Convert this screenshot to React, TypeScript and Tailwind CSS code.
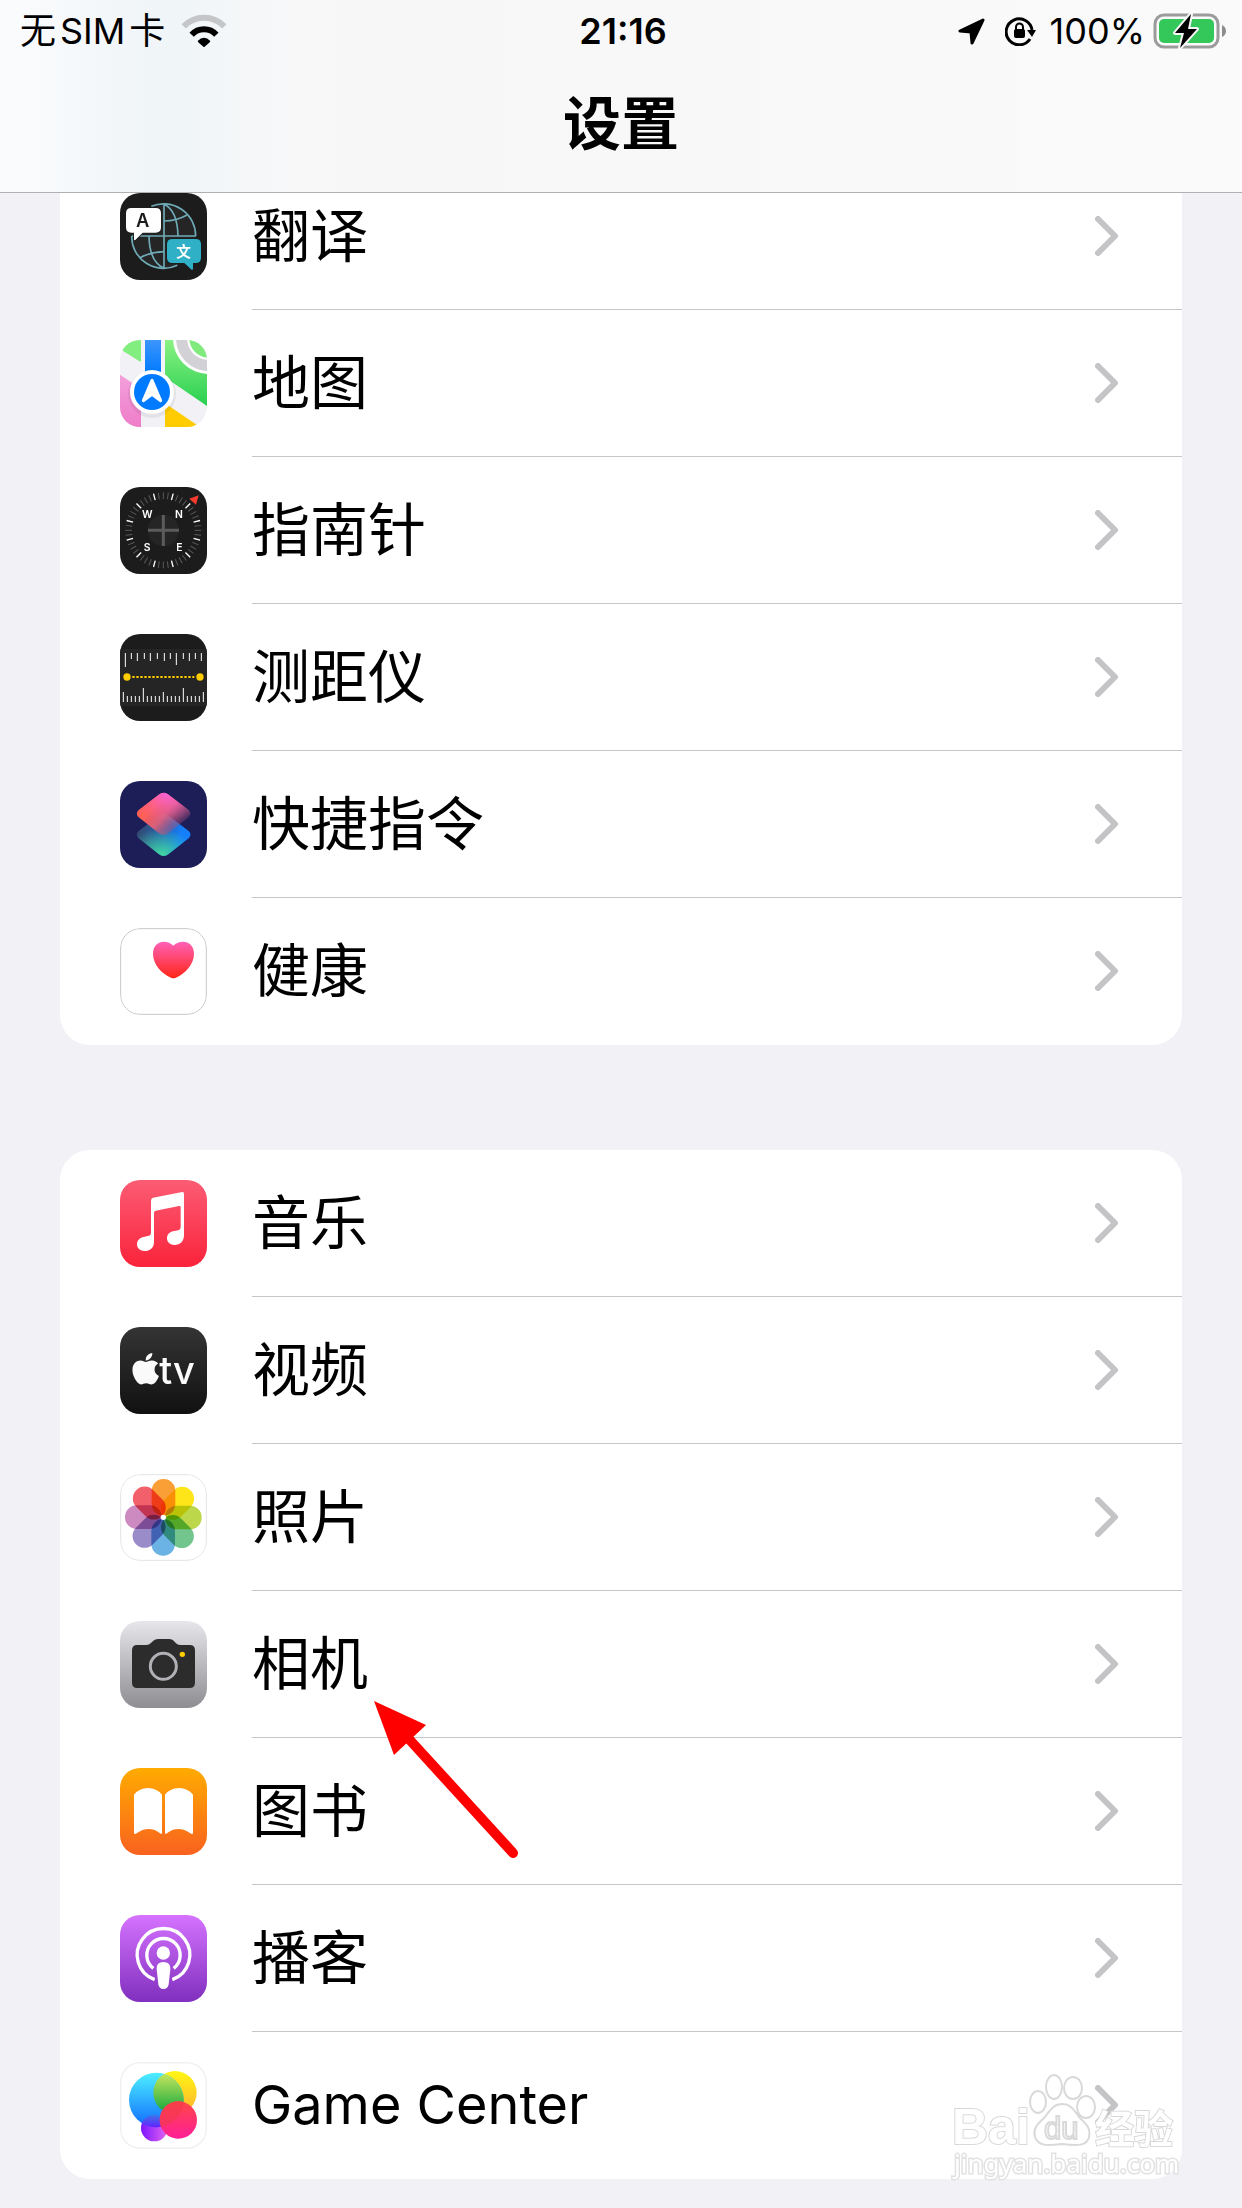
import type { ReactNode } from "react";
import { FaApple } from "react-icons/fa";

type Row = {
  name: string;
  icon: ReactNode;
  latin?: boolean;
  marked?: boolean;
};

/* Shared frame for the app icons */
function AppIcon({ children }: { children: ReactNode }) {
  return (
    <svg viewBox="0 0 261 261" className="size-[87px] shrink-0 rounded-[20px]" aria-hidden="true">
      {children}
    </svg>
  );
}

function Gradient({ id, from, to }: { id: string; from: string; to: string }) {
  return (
    <linearGradient id={id} x1="0" y1="0" x2="0" y2="1">
      <stop offset="0" stopColor={from} />
      <stop offset="1" stopColor={to} />
    </linearGradient>
  );
}

function TranslateIcon() {
  return (
    <AppIcon>
      <rect width="261" height="261" fill="#1c1c1c" />
      <circle cx="131" cy="130" r="96" fill="#252525" />
      <g fill="none" stroke="#6fabb7" strokeWidth="5">
        <path d="M94 40A96 96 0 0 1 227 129" />
        <path d="M35 129A96 96 0 0 0 172 217" />
        <path d="M132 34V227M35 129H228" />
        <path d="M132 34Q172 52 174 129M132 84Q170 84 201 66" />
        <path d="M87 129Q88 206 132 226M60 194Q90 178 132 176" />
      </g>
      <path d="M34 45H107Q123 45 123 61V103Q123 119 107 119H68L46 141Q42 143 42 138V119H34Q18 119 18 103V61Q18 45 34 45Z" fill="#fff" stroke="#1c1c1c" strokeWidth="5" paintOrder="stroke" />
      <text x="68" y="103" textAnchor="middle" fontFamily="Inter" fontSize="55" fontWeight="600" fill="#1c1c1c">A</text>
      <path d="M157 138H227Q243 138 243 154V194Q243 210 227 210H219V226Q219 234 213 229L193 210H157Q141 210 141 194V154Q141 138 157 138Z" fill="#30b0c7" stroke="#1c1c1c" strokeWidth="5" paintOrder="stroke" />
      <text x="191" y="191" textAnchor="middle" fontFamily="Noto Sans CJK SC" fontSize="44" fontWeight="700" fill="#fff">文</text>
    </AppIcon>
  );
}

function MapsIcon() {
  return (
    <AppIcon>
      <defs>
        <Gradient id="map-green" from="#8af283" to="#28cf50" />
        <Gradient id="map-pink" from="#f2a0dc" to="#ef7dc8" />
        <Gradient id="map-blue" from="#3d95fb" to="#007aff" />
      </defs>
      <rect width="261" height="261" fill="#f2f1f6" />
      <path d="M0 0H63V62Q62 67 57 63L0 27Z" fill="#82ee7f" />
      <path d="M135 0H261V198L135 112Z" fill="url(#map-green)" />
      <g>
        <circle cx="266" cy="-5" r="107" fill="#fff" />
        <circle cx="266" cy="-5" r="98" fill="#d1d1d6" />
        <circle cx="266" cy="-5" r="65" fill="#fff" />
        <circle cx="266" cy="-5" r="58" fill="#80eb7c" />
      </g>
      <path d="M63 0H75V100H63ZM123 0H135V100H123Z" fill="#f4f4f8" />
      <rect x="75" width="48" height="100" fill="url(#map-blue)" />
      <path d="M0 104L63 146V261H0Z" fill="url(#map-pink)" />
      <path d="M135 190L230 254L220 261H135Z" fill="#ffcc02" />
      <circle cx="96" cy="162" r="72" fill="#000" opacity="0.06" />
      <circle cx="96" cy="156" r="66" fill="#fff" />
      <circle cx="96" cy="156" r="54" fill="#007aff" />
      <path d="M96 121L70 182L96 163L122 182Z" fill="#fff" stroke="#fff" strokeWidth="9" strokeLinejoin="round" />
    </AppIcon>
  );
}

function CompassIcon() {
  return (
    <AppIcon>
      <rect width="261" height="261" fill="#1c1c1c" />
      {Array.from({ length: 48 }, (_, i) => (
        <path
          key={i}
          d="M130 16V36"
          stroke={i % 4 === 2 ? "#fff" : "#5a5a5a"}
          strokeWidth={i % 4 === 2 ? 4 : 3}
          transform={`rotate(${i * 7.5} 130 130)`}
        />
      ))}
      <circle cx="130" cy="130" r="47" fill="#252525" />
      <path d="M130 84V177M84 130H177" stroke="#5c5c5c" strokeWidth="9" />
      <path d="M236 25L228 53L208 35Z" fill="#ff3b30" />
      <g fontFamily="Inter" fontSize="31" fontWeight="600" fill="#fff" textAnchor="middle">
        <text x="82" y="93">W</text>
        <text x="177" y="93">N</text>
        <text x="81" y="192">S</text>
        <text x="178" y="192">E</text>
      </g>
    </AppIcon>
  );
}

function MeasureIcon() {
  return (
    <AppIcon>
      <rect width="261" height="261" fill="#1c1c1c" />
      <rect y="45" width="261" height="171" fill="#252525" />
      <path
        d="M16 57V99M34 57V75M52 57V81M73 57V75M91 57V81M112 57V75M133 57V81M151 57V75M169 57V93M190 57V75M208 57V81M226 57V75M244 57V81"
        stroke="#fff"
        strokeWidth="3"
      />
      {Array.from({ length: 21 }, (_, i) => (
        <path
          key={i}
          d={`M${10 + i * 12} 204V${i % 10 === 5 ? 162 : i % 5 === 0 ? 174 : 186}`}
          stroke="#fff"
          strokeWidth="3"
        />
      ))}
      <path d="M37 129H223" stroke="#ffcc00" strokeWidth="6" strokeDasharray="7 5" />
      <circle cx="21" cy="129" r="11" fill="#ffcc00" />
      <circle cx="240" cy="129" r="11" fill="#ffcc00" />
    </AppIcon>
  );
}

function ShortcutsIcon() {
  const diamond =
    "M116 41Q131 29 146 41L206 87Q217 98 206 109L146 156Q131 168 116 156L56 109Q45 98 56 87Z";
  return (
    <AppIcon>
      <defs>
        <linearGradient id="sc-blue" x1="0" y1="0.4" x2="0.8" y2="0.6">
          <stop offset="0" stopColor="#3c5a78" stopOpacity="0.7" />
          <stop offset="1" stopColor="#147efb" />
        </linearGradient>
        <radialGradient id="sc-green" cx="0.45" cy="1" r="0.65">
          <stop offset="0" stopColor="#43dd9c" />
          <stop offset="1" stopColor="#43dd9c" stopOpacity="0" />
        </radialGradient>
        <linearGradient id="sc-red" x1="0.3" y1="0.3" x2="0.95" y2="0.75">
          <stop offset="0" stopColor="#ff5f55" />
          <stop offset="0.4" stopColor="#e8607a" stopOpacity="0.9" />
          <stop offset="1" stopColor="#8a4a80" stopOpacity="0.2" />
        </linearGradient>
        <radialGradient id="sc-pink" cx="0.55" cy="0" r="0.7">
          <stop offset="0" stopColor="#fb62e0" />
          <stop offset="1" stopColor="#fb62a0" stopOpacity="0" />
        </radialGradient>
      </defs>
      <rect width="261" height="261" fill="#1d1e57" />
      <g transform="translate(0 63)">
        <path d={diamond} fill="url(#sc-blue)" />
        <path d={diamond} fill="url(#sc-green)" />
      </g>
      <path d={diamond} fill="url(#sc-red)" />
      <path d={diamond} fill="url(#sc-pink)" />
    </AppIcon>
  );
}

function HealthIcon() {
  return (
    <AppIcon>
      <defs>
        <Gradient id="heart" from="#ff61b8" to="#ff2616" />
      </defs>
      <rect x="2" y="2" width="257" height="257" rx="58" fill="#fff" stroke="#c8c8c8" strokeWidth="3" />
      <path
        d="M160 53C169 44 179 41 189 41C210 41 222 57 222 77C222 110 195 136 168 149Q160 152 153 149C125 136 99 110 99 77C99 57 111 41 132 41C143 41 152 45 160 53Z"
        fill="url(#heart)"
      />
    </AppIcon>
  );
}

function MusicIcon() {
  return (
    <AppIcon>
      <defs>
        <Gradient id="music" from="#fb5c74" to="#fa233b" />
      </defs>
      <rect width="261" height="261" fill="url(#music)" />
      <path
        d="M93 62Q93 55 99 53L187 36Q192 35 192 42V165C192 185 180 195 164 195C150 195 141 187 141 175C141 162 150 155 163 153C175 151 182 150 182 140V82Q182 77 177 78L107 92Q102 93 102 98V185C102 204 90 213 73 213C60 213 51 205 51 193C51 180 60 172 75 170C88 168 93 167 93 157Z"
        fill="#fff"
      />
    </AppIcon>
  );
}

function TvIcon() {
  return (
    <AppIcon>
      <defs>
        <Gradient id="tv" from="#343434" to="#111111" />
      </defs>
      <rect width="261" height="261" fill="url(#tv)" />
      <FaApple x="23" y="71" size={108} color="#fafafa" />
      <text x="118" y="171" fontFamily="Inter" fontSize="114" fontWeight="500" fill="#fafafa">tv</text>
    </AppIcon>
  );
}

function PhotosIcon() {
  const petals = ["#fa9f35", "#fde51a", "#bcd84a", "#72c58c", "#6bb3e4", "#9a8cc8", "#cd8ac0", "#f2606c"];
  return (
    <AppIcon>
      <rect x="2" y="2" width="257" height="257" rx="58" fill="#fff" stroke="#e4e4e4" strokeWidth="3" />
      {petals.map((color, i) => (
        <rect
          key={color}
          x="95"
          y="15"
          width="71"
          height="110"
          rx="35"
          fill={color}
          transform={`rotate(${i * 45} 130 130)`}
          className="mix-blend-multiply"
        />
      ))}
      <circle cx="130" cy="130" r="8" fill="#fff" />
    </AppIcon>
  );
}

function CameraIcon() {
  return (
    <AppIcon>
      <defs>
        <Gradient id="camera" from="#e6e6eb" to="#8d8d92" />
      </defs>
      <rect width="261" height="261" fill="url(#camera)" />
      <path
        d="M52 72H80Q87 72 92 67L100 59Q106 54 114 54H148Q156 54 161 59L168 67Q173 72 180 72H209Q225 72 225 88V185Q225 201 209 201H52Q36 201 36 185V88Q36 72 52 72Z"
        fill="#2c2c2c"
      />
      <circle cx="130" cy="136" r="39" fill="#2c2c2c" stroke="#b0b0b5" strokeWidth="9" />
      <circle cx="187" cy="100" r="8" fill="#ffcc00" />
    </AppIcon>
  );
}

function BooksIcon() {
  const page = "M42 80Q58 60 84 60Q110 60 126 80V194Q126 200 120 196Q105 183 86 183Q67 183 50 196Q42 201 42 194Z";
  return (
    <AppIcon>
      <defs>
        <Gradient id="books" from="#ffab00" to="#f9621f" />
      </defs>
      <rect width="261" height="261" fill="url(#books)" />
      <path d={page} fill="#fff" />
      <path d={page} fill="#fff" transform="translate(261 0) scale(-1 1)" />
    </AppIcon>
  );
}

function PodcastsIcon() {
  return (
    <AppIcon>
      <defs>
        <Gradient id="podcasts" from="#d573ff" to="#802fbe" />
      </defs>
      <rect width="261" height="261" fill="url(#podcasts)" />
      <g fill="none" stroke="#fff" strokeWidth="10">
        <path d="M104 194A79 79 0 1 1 157 194" />
        <path d="M100 160A50 50 0 1 1 161 160" />
      </g>
      <circle cx="130" cy="114" r="20" fill="#fff" />
      <path d="M130 141Q152 141 151 162L146 208Q144 222 130 222Q117 222 115 208L110 162Q109 141 130 141Z" fill="#fff" />
    </AppIcon>
  );
}

function GameCenterIcon() {
  return (
    <AppIcon>
      <defs>
        <Gradient id="gc-blue" from="#4df0ff" to="#0f6bff" />
        <Gradient id="gc-yellow" from="#fff714" to="#ffb02e" />
        <Gradient id="gc-green" from="#d2ea60" to="#0ba53c" />
        <Gradient id="gc-red" from="#ff4747" to="#ff1e98" />
        <linearGradient id="gc-purple" x1="0" x2="1">
          <stop offset="0" stopColor="#7c16ff" />
          <stop offset="1" stopColor="#e566ee" />
        </linearGradient>
        <Gradient id="gc-mix" from="#3a78e8" to="#6a1cff" />
        <clipPath id="gc-clip">
          <circle cx="109" cy="114" r="82" />
        </clipPath>
      </defs>
      <rect x="2" y="2" width="257" height="257" rx="58" fill="#fff" stroke="#f0f0f0" strokeWidth="5" />
      <circle cx="103" cy="198" r="40" fill="url(#gc-purple)" />
      <circle cx="165" cy="92" r="65" fill="url(#gc-yellow)" />
      <circle cx="109" cy="114" r="82" fill="url(#gc-blue)" />
      <g clipPath="url(#gc-clip)">
        <circle cx="165" cy="92" r="65" fill="url(#gc-green)" />
        <path d="M63 198A40 40 0 0 1 143 198Z" fill="url(#gc-mix)" />
      </g>
      <circle cx="175" cy="174" r="56" fill="url(#gc-red)" />
      <g clipPath="url(#gc-clip)">
        <circle cx="175" cy="174" r="56" fill="#f03848" opacity="0.5" />
      </g>
    </AppIcon>
  );
}

const systemApps: Row[] = [
  { name: "翻译", icon: <TranslateIcon /> },
  { name: "地图", icon: <MapsIcon /> },
  { name: "指南针", icon: <CompassIcon /> },
  { name: "测距仪", icon: <MeasureIcon /> },
  { name: "快捷指令", icon: <ShortcutsIcon /> },
  { name: "健康", icon: <HealthIcon /> },
];

const mediaApps: Row[] = [
  { name: "音乐", icon: <MusicIcon /> },
  { name: "视频", icon: <TvIcon /> },
  { name: "照片", icon: <PhotosIcon /> },
  { name: "相机", icon: <CameraIcon />, marked: true },
  { name: "图书", icon: <BooksIcon /> },
  { name: "播客", icon: <PodcastsIcon /> },
  { name: "Game Center", icon: <GameCenterIcon />, latin: true },
];

function Arrow() {
  return (
    <svg viewBox="0 0 146 160" className="absolute left-[314px] top-[110px] z-10 h-[160px] w-[146px]" aria-hidden="true">
      <path d="M34 37L139 152" stroke="#ff0000" strokeWidth="10" strokeLinecap="round" />
      <path d="M0 0L52 24L20 54Z" fill="#ff0000" />
    </svg>
  );
}

function SettingsRow({ row }: { row: Row }) {
  return (
    <li className="group relative">
      <a href="#" className="flex items-start pl-[60px]">
        <span className="pt-[30px]">{row.icon}</span>
        <span className="ml-[45px] flex h-[147px] flex-1 items-center justify-between border-b border-[#c6c6c8] pr-[63px] group-last:border-transparent">
          <span className={row.latin ? "text-[54px] leading-[80px]" : "text-[58px] leading-[80px]"}>
            {row.name}
          </span>
          <svg viewBox="0 0 24 40" className="h-10 w-6" fill="none" aria-hidden="true">
            <path d="M3 3L20 20L3 37" stroke="#c4c4c6" strokeWidth="6" strokeLinecap="round" strokeLinejoin="round" />
          </svg>
        </span>
      </a>
      {row.marked && <Arrow />}
    </li>
  );
}

function Watermark() {
  return (
    <svg viewBox="0 0 230 115" className="pointer-events-none absolute -bottom-1.5 right-0.5 h-[115px] w-[230px]" fill="#fff" stroke="#d9d9d9" strokeWidth="2">
      <g paintOrder="stroke">
        <text x="2" y="74" fontFamily="Liberation Sans" fontSize="50" fontWeight="700">Bai</text>
        <text x="145" y="73" fontFamily="Noto Sans CJK SC" fontSize="39" fontWeight="700">经验</text>
        <text x="4" y="103" fontFamily="Noto Sans" fontSize="26" strokeWidth="3" stroke="#e2e2e2">jingyan.baidu.com</text>
      </g>
      <ellipse cx="88" cy="32" rx="8" ry="11" />
      <ellipse cx="104" cy="17" rx="8" ry="12" />
      <ellipse cx="123" cy="18" rx="9" ry="11" />
      <ellipse cx="136" cy="37" rx="9" ry="11" />
      <path d="M112 34C102 34 99 43 93 49C86 55 83 60 85 67C88 76 97 76 112 74C128 76 137 76 139 67C141 58 136 54 130 48C124 41 122 34 112 34Z" />
      <text x="94" y="69" fontFamily="Liberation Sans" fontSize="31">du</text>
    </svg>
  );
}

function StatusBar() {
  return (
    <div className="grid h-[62px] grid-cols-3 items-center pl-5 pr-4 text-[36px] leading-[44px]">
      <div className="flex items-center gap-4">
        <span>
          无<span className="mx-1">SIM</span>卡
        </span>
        <svg viewBox="0 0 136 102" className="h-[34px] w-[46px]" fill="none" aria-label="Wi-Fi">
          <path d="M7 37A85 85 0 0 1 129 37" stroke="#c4c6c8" strokeWidth="18" />
          <path d="M31 62A50 50 0 0 1 105 62" stroke="#000" strokeWidth="18" />
          <path d="M49 81Q68 62 87 81Q86 85 82 88L68 100L54 88Q50 85 49 81Z" fill="#000" />
        </svg>
      </div>
      <time className="text-center font-semibold">21:16</time>
      <div className="flex items-center justify-end gap-2">
        <svg viewBox="0 0 27 27" className="mr-3 size-[27px]" aria-hidden="true">
          <path d="M25 2L2 13L13 14L14 25Z" stroke="#000" strokeWidth="3" strokeLinejoin="round" />
        </svg>
        <svg viewBox="0 0 31 30" className="mr-1.5 h-[30px] w-[31px]" fill="none" aria-hidden="true">
          <path d="M25 23A13 13 0 1 1 27 14" stroke="#000" strokeWidth="3" />
          <path d="M22 14H31L27 21Z" fill="#000" />
          <rect x="9" y="13" width="11" height="9" rx="2" fill="#000" />
          <path d="M11 14V11A3 3 0 0 1 18 11V14" stroke="#000" strokeWidth="2" />
        </svg>
        <span>100%</span>
        <svg viewBox="0 0 73 36" className="h-9 w-[73px]" fill="none" aria-label="电池">
          <rect x="2" y="2" width="63" height="32" rx="9" stroke="#9b9b9c" strokeWidth="3" />
          <rect x="6" y="6" width="55" height="24" rx="5" fill="#34c759" />
          <path d="M69 12Q73 14 73 18Q73 22 69 24Z" fill="#8d8d8e" />
          <path d="M38 1L22 20H31L27 35L44 16H35Z" fill="#000" stroke="#f7f7f7" strokeWidth="4" strokeLinejoin="round" paintOrder="stroke" />
        </svg>
      </div>
    </div>
  );
}

export default function App() {
  return (
    <div
      lang="zh-CN"
      className="min-h-screen bg-[#f2f1f6] pb-[29px] font-['Inter','Noto_Sans_CJK_SC',sans-serif] text-black"
    >
      {/* Header */}
      <header className="sticky top-0 z-20 h-[193px] border-b border-[#b0b0b2] bg-linear-to-r from-[#fbfcfe] via-[#f7f7f7] via-30% to-[#fafafb]">
        <div className="h-full bg-linear-to-r from-transparent via-[#f0f5f8] via-14% to-transparent to-24%">
          <StatusBar />
          <h1 className="pt-6 text-center text-[58px] font-semibold leading-[76px]">设置</h1>
        </div>
      </header>

      {/* App list, scrolled part way under the header */}
      <main className="-mt-[30px] flex flex-col gap-[105px] px-[60px]">
        <section className="rounded-[30px] bg-white">
          <ul>
            {systemApps.map((row) => (
              <SettingsRow key={row.name} row={row} />
            ))}
          </ul>
        </section>

        <section className="relative rounded-[30px] bg-white">
          <ul>
            {mediaApps.map((row) => (
              <SettingsRow key={row.name} row={row} />
            ))}
          </ul>
          <Watermark />
        </section>
      </main>
    </div>
  );
}
